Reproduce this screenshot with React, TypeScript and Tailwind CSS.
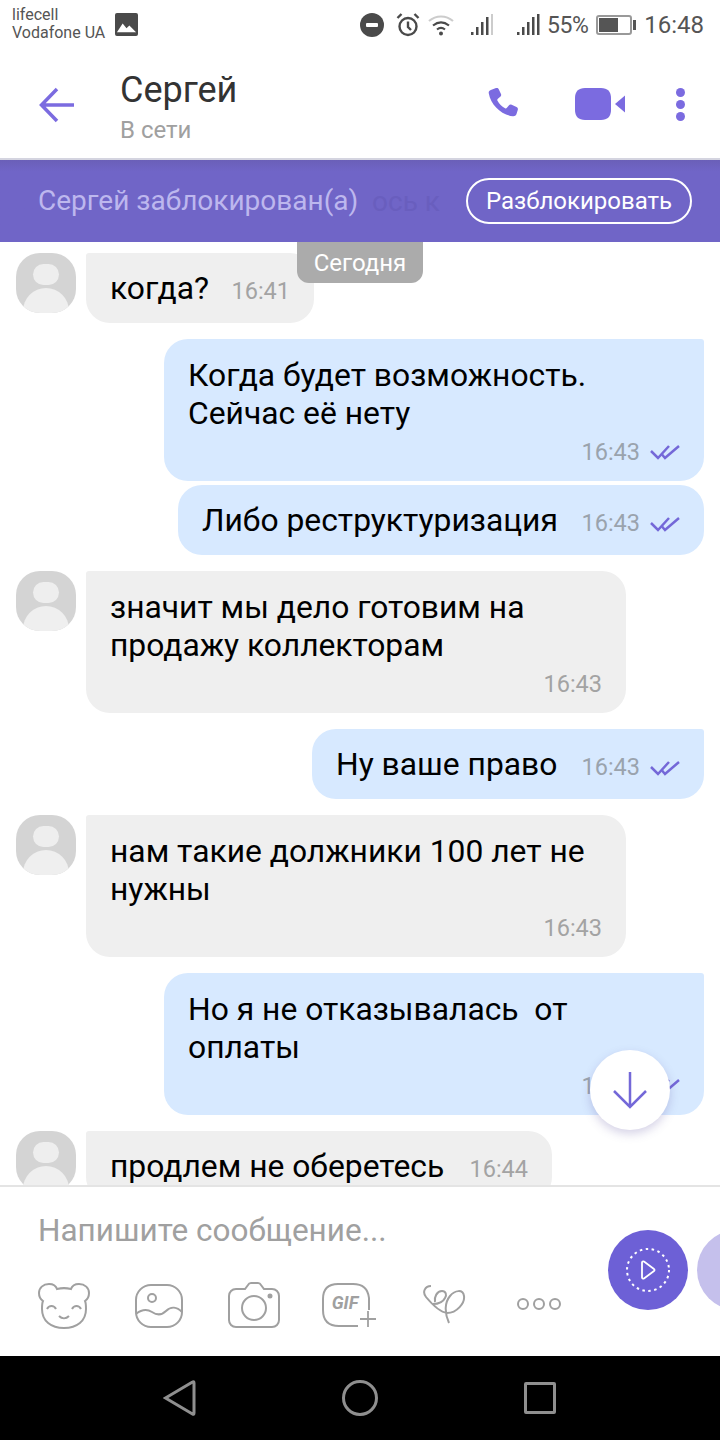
import React from 'react';

const Checks = () => (
    <svg width="30" height="16" viewBox="0 0 30 16" fill="none" stroke="#7468d8" strokeWidth="2.5" className="shrink-0">
        <path d="M1 7l7 7L19 2" />
        <path d="M12 10.500l3 3.500L29 2" />
    </svg>
);

const Avatar = () => (
    <div className="w-[60px] h-[60px] shrink-0 rounded-[24px] bg-[#d4d4d4] overflow-hidden flex flex-col items-center">
        <div className="w-[26px] h-[25px] rounded-full bg-[#eeeeee] mt-[11px]" />
        <div className="w-[46px] h-[30px] rounded-t-[24px] bg-[#efefef] mt-[3px]" />
    </div>
);

interface BubbleProps {
    lines: string[];
    time: string;
    width: string;
    first?: boolean;
}

// incoming message with avatar
const Incoming: React.FC<BubbleProps> = ({ lines, time, width }) => {
    const single = lines.length === 1;
    return (
        <div className="flex gap-[10px] pl-4">
            <Avatar />
            <div className={`${width} bg-[#efefef] rounded-tl-[3px] rounded-tr-[24px] rounded-b-[24px] pl-6 pr-[24px] ${single ? 'h-[70px] flex items-center justify-between' : 'h-[142px] pt-[17px]'}`}>
                {single ? (
                    <>
                        <span className="text-[31.8px] leading-[38px] text-black">{lines[0]}</span>
                        <span className="text-[23.5px] text-[#a3a3a3] mt-[7px]">{time}</span>
                    </>
                ) : (
                    <>
                        {lines.map((l) => (
                            <div key={l} className="text-[31.8px] leading-[38px] text-black whitespace-pre">{l}</div>
                        ))}
                        <div className="text-[23.5px] leading-[30px] text-[#a3a3a3] text-right mt-[5px]">{time}</div>
                    </>
                )}
            </div>
        </div>
    );
};

const Outgoing: React.FC<BubbleProps> = ({ lines, time, width, first = true }) => {
    const single = lines.length === 1;
    return (
        <div className="flex justify-end pr-4">
            <div className={`${width} bg-[#d7e9ff] rounded-l-[24px] rounded-br-[24px] ${first ? 'rounded-tr-[3px]' : 'rounded-tr-[24px]'} pl-6 pr-6 ${single ? 'h-[70px] flex items-center justify-between' : 'h-[142px] pt-[17px]'}`}>
                {single ? (
                    <>
                        <span className="text-[31.8px] leading-[38px] text-black">{lines[0]}</span>
                        <span className="flex items-center gap-[10px] text-[23.5px] text-[#9aa3ad] mt-[8px]">{time}<Checks /></span>
                    </>
                ) : (
                    <>
                        {lines.map((l) => (
                            <div key={l} className="text-[31.8px] leading-[38px] text-black whitespace-pre">{l}</div>
                        ))}
                        <div className="flex items-center justify-end gap-[10px] text-[23.5px] leading-[30px] text-[#9aa3ad] mt-[5px]">{time}<Checks /></div>
                    </>
                )}
            </div>
        </div>
    );
};

const StatusBar = () => (
    <div className="h-[56px] flex items-start pl-3 pr-4 text-[#555555]">
        <div className="text-[16px] leading-[18px] pt-[6px]">
            <div>lifecell</div>
            <div>Vodafone UA</div>
        </div>
        <svg width="23" height="23" viewBox="0 0 24 24" className="ml-[10px] mt-[13px]">
            <rect width="24" height="24" rx="2" fill="#4a4a4a" />
            <path d="M2 20l6-9 4 5 3-3 7 7z" fill="#fff" />
        </svg>
        <div className="ml-auto flex items-center mt-[12px]">
            <svg width="24" height="24" viewBox="0 0 24 24">
                <circle cx="12" cy="12" r="12" fill="#4a4a4a" />
                <rect x="6" y="10" width="12" height="4" rx="1" fill="#fff" />
            </svg>
            <svg width="26" height="26" viewBox="0 0 26 26" fill="none" stroke="#4a4a4a" strokeWidth="2.4" className="ml-[11px]">
                <circle cx="13" cy="14.500" r="8.500" />
                <path d="M13 9.500v5.500l3 3M2.500 6l4-4M23.500 6l-4-4" />
            </svg>
            <svg width="28" height="24" viewBox="0 0 28 24" fill="none" className="ml-[6px]">
                <path d="M2 8c7-6 17-6 24 0" stroke="#cccccc" strokeWidth="2.2" />
                <path d="M6 12.500c5-4 11-4 16 0M10 16.500c2.500-2 5.500-2 8 0" stroke="#4a4a4a" strokeWidth="2.2" />
                <circle cx="14" cy="20.500" r="2" fill="#4a4a4a" />
            </svg>
            <svg width="24" height="24" viewBox="0 0 24 24" className="ml-[15px]" fill="#4a4a4a">
                <rect x="1" y="19" width="2.500" height="3" />
                <rect x="6" y="14" width="2.500" height="8" />
                <rect x="11" y="9" width="2.500" height="13" />
                <rect x="16" y="4" width="2.500" height="18" />
                <rect x="21" y="1" width="2" height="21" fill="#cccccc" />
            </svg>
            <svg width="24" height="24" viewBox="0 0 24 24" className="ml-[22px]" fill="#4a4a4a">
                <rect x="1" y="19" width="2.500" height="3" />
                <rect x="6" y="14" width="2.500" height="8" />
                <rect x="11" y="9" width="2.500" height="13" />
                <rect x="16" y="4" width="2.500" height="18" />
                <rect x="21" y="1" width="2.500" height="21" />
            </svg>
            <span className="text-[23px] ml-[7px] leading-none tracking-[-0.5px]">55%</span>
            <div className="ml-2 flex items-center">
                <div className="w-[36px] h-[20px] border-2 border-[#999999] rounded-[3px] p-[1px]">
                    <div className="w-[19px] h-full bg-[#555555]" />
                </div>
                <div className="w-[3px] h-[10px] bg-[#555555] ml-[1px]" />
            </div>
            <span className="text-[24px] ml-[8px] leading-none">16:48</span>
        </div>
    </div>
);

const Header = () => (
    <div className="h-[104px] flex items-start border-b-2 border-[#d4d4e0]">
        <svg width="36" height="36" viewBox="0 0 36 36" fill="none" stroke="#7b6be0" strokeWidth="3.500" className="ml-[39px] mt-[31px]">
            <path d="M35 18H3M18 2L2.500 18 18 34" />
        </svg>
        <div className="ml-[45px] mt-[12px]">
            <div className="text-[36px] leading-[44px] text-[#333333]">Сергей</div>
            <div className="text-[24px] leading-[28px] mt-[4px] text-[#a0a0a0]">В сети</div>
        </div>
        <div className="ml-auto flex items-start mt-[32px] mr-[35px]">
            <svg width="32" height="32" viewBox="0 0 34 34" fill="#7b6be0">
                <path d="M3 2l5.500-2c1.300-.4 2.300 0 2.900 1.300l2.400 5c.5 1.200.2 2.200-.8 3l-2.500 2.200c-.7.600-.8 1.200-.4 2 1.800 3.500 4.400 6.200 8 8 .8.400 1.400.3 2-.4l2-2.500c.8-1 1.900-1.200 3-.7l5.200 2.400c1.200.6 1.700 1.600 1.400 2.900l-1.500 4.800c-.5 1.500-2 2.100-3.700 2C14 28.500 3 18 .8 5.500.500 3.800 1.500 2.600 3 2z" />
            </svg>
            <svg width="50" height="32" viewBox="0 0 50 32" fill="#7b6be0" className="ml-[55px]">
                <path d="M10 0h16c6.500 0 10 3.500 10 10v12c0 6.500-3.500 10-10 10H10C3.500 32 0 28.500 0 22V10C0 3.500 3.500 0 10 0z" />
                <path d="M50 7.500v17L40 16z" />
            </svg>
            <div className="ml-[51px] flex flex-col gap-[3px]">
                <div className="w-[9px] h-[9px] rounded-full bg-[#7b6be0]" />
                <div className="w-[9px] h-[9px] rounded-full bg-[#7b6be0]" />
                <div className="w-[9px] h-[9px] rounded-full bg-[#7b6be0]" />
            </div>
        </div>
    </div>
);

const Banner = () => (
    <div className="h-[82px] relative flex items-center pl-[38px] pr-7 justify-between bg-gradient-to-b from-[#6a5fb8] to-[#7065c7] to-[14%]">
        <span className="absolute left-[372px] top-[24px] text-[28px] leading-[36px] text-[#695ebe] whitespace-pre">ось к</span>
        <span className="relative text-[28px] text-[#bdb7ee]">Сергей заблокирован(а)</span>
        <div className="relative w-[226px] h-[46px] rounded-full border-2 border-white text-white text-[24px] flex items-center justify-center">Разблокировать</div>
    </div>
);

const Composer = () => (
    <div className="h-[171px] border-t-2 border-[#e4e4e4] flex overflow-hidden bg-white">
        <div className="w-[608px] shrink-0 pl-[38px]">
            <div className="text-[31.5px] leading-[36px] text-[#a0a0a0] mt-[26px]">Напишите сообщение...</div>
            <div className="flex items-start mt-[33px] text-[#a0a0a0]">
                <svg width="52" height="46" viewBox="0 0 52 46" fill="none" stroke="#a0a0a0" strokeWidth="2" className="mt-[1px]">
                    <path d="M19 6c4-1 10-1 14 0 1-3 4-5 8-5 6 0 10 4 10 9 0 3-1 6-4 8 1 2 1 5 1 8 0 12-9 19-22 19S4 38 4 26c0-3 0-6 1-8-3-2-4-5-4-8 0-5 4-9 10-9 4 0 7 2 8 5z" />
                    <path d="M9 26c2-4 7-4 9 0M34 26c2-4 7-4 9 0M21 33c3 3 7 3 10 0" />
                </svg>
                <svg width="48" height="44" viewBox="0 0 48 44" fill="none" stroke="#a0a0a0" strokeWidth="2" className="ml-[45px] mt-[2px]">
                    <rect x="1" y="1" width="46" height="42" rx="15" />
                    <circle cx="17" cy="14" r="4" />
                    <path d="M1 30c5-4 11-5 16-2 6 4 10 3 14-1 5-5 11-4 16 1" />
                </svg>
                <svg width="52" height="46" viewBox="0 0 52 46" fill="none" stroke="#a0a0a0" strokeWidth="2" className="ml-[45px]">
                    <path d="M8 7h9l3-4c.500-1 1.500-2 3-2h7c1.500 0 2.500 1 3 2l3 4h8c4 0 7 3 7 7v24c0 4-3 7-7 7H8c-4 0-7-3-7-7V14c0-4 3-7 7-7z" />
                    <circle cx="26" cy="26" r="12" />
                    <circle cx="42" cy="14" r="1.500" fill="#a0a0a0" />
                </svg>
                <div className="relative w-[54px] h-[44px] ml-[42px] mt-[1px] flex items-center justify-center">
                    <svg width="54" height="44" viewBox="0 0 54 44" fill="none" stroke="#a0a0a0" strokeWidth="2" className="absolute inset-0">
                        <path d="M36 43H17C6 43 1 37 1 27V16C1 6 6 1 16 1h15c10 0 15 5 16 14v12" />
                        <path d="M46 28v16M38 36h16" strokeWidth="1.800" />
                    </svg>
                    <span className="text-[18px] font-bold italic leading-none pr-[8px] pb-[4px]">GIF</span>
                </div>
                <svg width="44" height="40" viewBox="0 0 44 40" fill="none" stroke="#a0a0a0" strokeWidth="2" className="ml-[46px] mt-[3px]">
                    <path d="M9 1C3 1 0 7 4 12c5 6 13 15 21 16 10 0 18-10 17-17-1-7-9-6-14 0-5 6-6 16-1 27" />
                    <path d="M13 17c-1-5 2-11 7-11 4 0 5 4 3 7-2 4-7 6-12 6" />
                </svg>
                <div className="ml-[51px] mt-[16px] flex gap-[4px]">
                    <div className="w-[12px] h-[12px] rounded-full border-2 border-[#a0a0a0]" />
                    <div className="w-[12px] h-[12px] rounded-full border-2 border-[#a0a0a0]" />
                    <div className="w-[12px] h-[12px] rounded-full border-2 border-[#a0a0a0]" />
                </div>
            </div>
        </div>
        <div className="w-[80px] h-[80px] shrink-0 rounded-full bg-[#6d60d6] mt-[43px] flex items-center justify-center">
            <svg width="46" height="46" viewBox="0 0 46 46" fill="none" stroke="#ffffff">
                <circle cx="23" cy="23" r="21" strokeWidth="2" strokeDasharray="2.500 3.500" />
                <path d="M17 15.500c0-1 1-1.500 2-1l10 7.500c.7.5.7 1.500 0 2l-10 7.500c-1 .5-2 0-2-1z" strokeWidth="1.800" />
            </svg>
        </div>
        <div className="w-[80px] h-[80px] shrink-0 rounded-full bg-[#c5c0ec] mt-[43px] ml-[9px]" />
    </div>
);

const NavBar = () => (
    <div className="h-[84px] bg-black flex items-start pl-[163px] pt-[24px]">
        <svg width="33" height="36" viewBox="0 0 33 36" fill="none" stroke="#8f8f8f" strokeWidth="3">
            <path d="M31 3v30q0 2-1.500 1L2.500 18 29.500 2q1.500-1 1.500 1z" />
        </svg>
        <div className="w-[36px] h-[36px] rounded-full border-[3px] border-[#8f8f8f] ml-[146px]" />
        <div className="w-[32px] h-[32px] rounded-[2px] border-[3px] border-[#8f8f8f] ml-[146px] mt-[2px]" />
    </div>
);

export default function App() {
    return (
        <div className="w-[720px] h-[1440px] bg-white flex flex-col overflow-hidden font-['Roboto',sans-serif]">
            <StatusBar />
            <Header />
            <Banner />

            {/* Messages */}
            <div className="relative flex-1 overflow-hidden pt-[11px] flex flex-col gap-4">
                <div className="absolute left-[297px] top-0 w-[126px] h-[41px] rounded-b-xl bg-[#ababab] text-white text-[24px] flex items-center justify-center z-10">Сегодня</div>
                <Incoming lines={['когда?']} time="16:41" width="w-[228px]" />
                <div className="flex flex-col gap-1">
                    <Outgoing lines={['Когда будет возможность.', 'Сейчас её нету']} time="16:43" width="w-[540px]" />
                    <Outgoing lines={['Либо реструктуризация']} time="16:43" width="w-[526px]" first={false} />
                </div>
                <Incoming lines={['значит мы дело готовим на', 'продажу коллекторам']} time="16:43" width="w-[540px]" />
                <Outgoing lines={['Ну ваше право']} time="16:43" width="w-[392px]" />
                <Incoming lines={['нам такие должники 100 лет не', 'нужны']} time="16:43" width="w-[540px]" />
                <Outgoing lines={['Но я не отказывалась  от', 'оплаты']} time="16:43" width="w-[540px]" />
                <Incoming lines={['продлем не оберетесь']} time="16:44" width="w-[466px]" />
                <div className="absolute left-[590px] top-[808px] w-[80px] h-[80px] rounded-full bg-white shadow-[0_4px_10px_rgba(90,80,160,0.25)] flex items-center justify-center">
                    <svg width="36" height="38" viewBox="0 0 36 38" fill="none" stroke="#7468d8" strokeWidth="2.500">
                        <path d="M18 1v35M2 20l16 16 16-16" />
                    </svg>
                </div>
            </div>

            <Composer />
            <NavBar />
        </div>
    );
}
